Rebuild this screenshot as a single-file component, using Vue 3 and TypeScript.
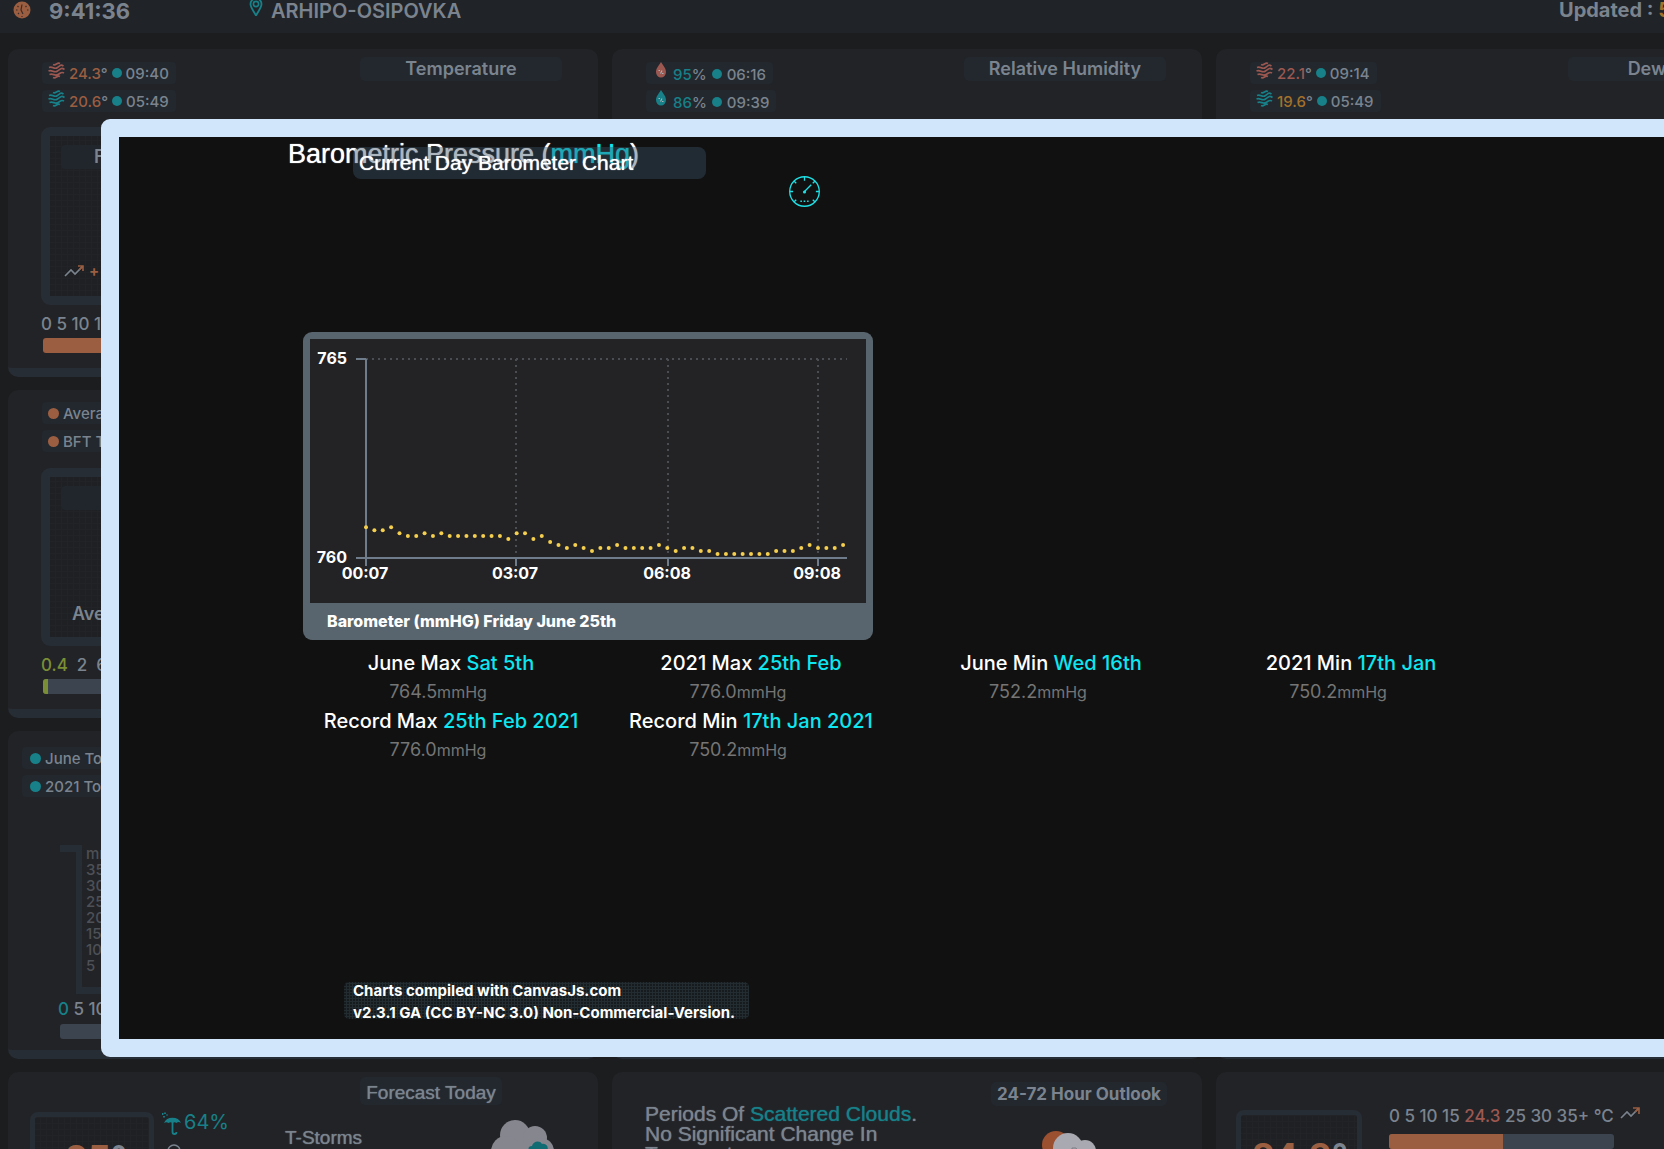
<script setup lang="ts">
interface Reading {
  icon: 'wave' | 'drop'
  tone: string
  value: string
  unit: string
  valueTone: string
  time: string
}

interface TopCard {
  title: string
  readings: Reading[]
}

interface Stat {
  label: string
  date: string
  value: string
}

const topCards: TopCard[] = [
  {
    title: 'Temperature',
    readings: [
      { icon: 'wave', tone: 'red', value: '24.3', unit: '°', valueTone: 'orange', time: '09:40' },
      { icon: 'wave', tone: 'teal', value: '20.6', unit: '°', valueTone: 'orange', time: '05:49' },
    ],
  },
  {
    title: 'Relative Humidity',
    readings: [
      { icon: 'drop', tone: 'red', value: '95', unit: '%', valueTone: 'teal', time: '06:16' },
      { icon: 'drop', tone: 'teal', value: '86', unit: '%', valueTone: 'teal', time: '09:39' },
    ],
  },
  {
    title: 'Dewpoint',
    readings: [
      { icon: 'wave', tone: 'red', value: '22.1', unit: '°', valueTone: 'red', time: '09:14' },
      { icon: 'wave', tone: 'teal', value: '19.6', unit: '°', valueTone: 'amber', time: '05:49' },
    ],
  },
]

const stats: Stat[] = [
  { label: 'June Max', date: 'Sat 5th', value: '764.5' },
  { label: '2021 Max', date: '25th Feb', value: '776.0' },
  { label: 'June Min', date: 'Wed 16th', value: '752.2' },
  { label: '2021 Min', date: '17th Jan', value: '750.2' },
  { label: 'Record Max', date: '25th Feb 2021', value: '776.0' },
  { label: 'Record Min', date: '17th Jan 2021', value: '750.2' },
]

const gaugeMarks = ['mm', '35', '30', '25', '20', '15', '10', '5']

// Readings every ten minutes, in steps of 0.1 hPa above 760.1 mmHg.
const steps = [
  9, 8, 8, 9, 7, 6, 6, 7, 6, 7, 6, 6, 6, 6, 6, 6, 6, 5, 7, 7, 5, 6, 4, 3, 2, 3, 2, 1, 2, 2,
  3, 2, 2, 2, 2, 3, 2, 1, 2, 2, 1, 1, 0, 0, 0, 0, 0, 0, 0, 1, 1, 1, 2, 3, 2, 2, 2, 3,
]
const axis = { left: 56, right: 537, top: 20, bottom: 219 }
const points = steps.map((s, i) => ({
  x: axis.left + i * 8.37,
  y: axis.bottom - ((0.1 + s * 0.075) * (axis.bottom - axis.top)) / 5,
}))
const timeTicks = [
  { x: 56, label: '00:07' },
  { x: 206, label: '03:07' },
  { x: 358, label: '06:08' },
  { x: 508, label: '09:08' },
]
</script>

<template>
  <div class="page">
    <header class="topbar">
      <svg class="clock" viewBox="0 0 18 18" aria-hidden="true">
        <circle cx="9" cy="9" r="8.5" fill="#9b5e41" />
        <path d="M9 3.500L8 9l2 4M3 9h1.500M14 9h1.500M9 15v1M4.500 5l1 1M13.500 5l-1 1M5 13l1-1" stroke="#3a2c28" stroke-width="1.200" fill="none" />
      </svg>
      <time class="now">9:41:36</time>
      <svg class="pin" viewBox="0 0 14 18" aria-hidden="true">
        <path d="M7 17.500C4 12 1.500 9.500 1.500 6a5.500 5.500 0 0 1 11 0c0 3.500-2.500 6-5.500 11.500z" fill="none" stroke="#178088" stroke-width="1.800" />
        <circle cx="7" cy="6" r="2.600" fill="none" stroke="#178088" stroke-width="1.600" />
      </svg>
      <span class="place">ARHIPO-OSIPOVKA</span>
      <span class="updated">Updated : <span class="amber">59</span></span>
    </header>

    <main class="grid">
      <section v-for="(card, index) in topCards" :key="card.title" class="card">
        <div class="head">
          <div class="pills">
            <div v-for="r in card.readings" :key="r.time" class="pill" :class="r.icon + '-pill'">
              <svg v-if="r.icon === 'wave'" class="wave" :class="r.tone" viewBox="0 0 17 17" aria-hidden="true">
                <path
                  d="M5 2.500C8 4 9 0 12 1.500M1 5.500C5 4 6 8 9.500 5.500S13 2.500 15.500 4M.500 9C4.500 7.500 6 11.500 9.500 9s4-3.500 7-1.500M1.500 12.500c4-1.500 5 2 8.500 0s3.500-3 6-1.500M5 15.500c3 1.500 4-2.500 7-1"
                  fill="none" stroke="currentColor" stroke-width="1.700" />
              </svg>
              <svg v-else class="drop" :class="r.tone" viewBox="0 0 12 16" aria-hidden="true">
                <path d="M6 0c2.500 4 5 6.500 5 10a5 5.500 0 0 1-10 0c0-3.500 2.500-6 5-10z" fill="currentColor" />
                <path d="M3.500 8.500h1.500M7 11.500h1.500M5.500 11.500l1.500-3" stroke="#a9b3b8" stroke-width="1.100" />
              </svg>
              <span><span :class="r.valueTone">{{ r.value }}</span>{{ r.unit }}</span>
              <i class="dot teal"></i>
              <span>{{ r.time }}</span>
            </div>
          </div>
          <h2 class="tag">{{ card.title }}</h2>
        </div>
        <template v-if="index === 0">
          <div class="panel">
            <div class="strip">Feels</div>
            <div class="trend">
              <svg viewBox="0 0 20 12" aria-hidden="true">
                <path d="M1 11l6-6 4 4 7-7" fill="none" stroke="#7b848e" stroke-width="1.600" />
                <path d="M14 1h5v5M15 5l4-4" fill="none" stroke="#9b5e41" stroke-width="1.600" />
              </svg>
              <span class="orange">+</span>
            </div>
          </div>
          <div class="scale">0 5 10 15</div>
          <div class="bar orange-bar"></div>
        </template>
      </section>

      <section class="card wind">
        <div class="head">
          <div class="pills">
            <div class="pill"><i class="dot orange"></i><span>Average</span></div>
            <div class="pill"><i class="dot orange"></i><span>BFT Today</span></div>
          </div>
        </div>
        <div class="panel">
          <div class="strip"></div>
          <div class="average">Average</div>
        </div>
        <div class="scale wide"><span class="green">0.4</span><span>2</span><span>6</span></div>
        <div class="bar"><div class="green-bar"></div></div>
      </section>
      <section class="card"></section>
      <section class="card"></section>

      <section class="card rain">
        <div class="head">
          <div class="pills">
            <div class="pill"><i class="dot teal"></i><span>June Total</span></div>
            <div class="pill"><i class="dot teal"></i><span>2021 Total</span></div>
          </div>
        </div>
        <div class="gauge">
          <div class="lip"></div>
          <ol class="tube">
            <li v-for="mark in gaugeMarks" :key="mark">{{ mark }}</li>
          </ol>
        </div>
        <div class="scale"><span class="teal">0</span> 5 10</div>
        <div class="bar"></div>
      </section>
      <section class="card"></section>
      <section class="card"></section>

      <section class="card forecast">
        <h2 class="tag sans">Forecast Today</h2>
        <div class="forecast-row">
          <div class="mini"><span class="orange">25</span>°</div>
          <div class="rainchance">
            <div class="chance teal">
              <svg viewBox="0 0 20 24" aria-hidden="true">
                <path d="M2 11a9 8 0 0 1 17 0c-2-1.200-3-1.200-4.500 0-1.200-1-2.500-1-4 0-1.200-1-2.500-1-4 0C5 9.800 3.500 10 2 11z" fill="currentColor" />
                <path d="M10.500 8v12a2 2 0 0 0 4 0M.5 1v2M3 .5v1.500M2 4v1.500M5 2.500v1" fill="none" stroke="currentColor" stroke-width="1.800" />
              </svg>
              <span>64%</span>
            </div>
            <svg class="ring" viewBox="0 0 14 14" aria-hidden="true">
              <circle cx="7" cy="7" r="6" fill="none" stroke="#7b848e" stroke-width="1.500" />
            </svg>
          </div>
          <div class="condition">T-Storms</div>
          <svg class="cloud" viewBox="0 0 64 50" aria-hidden="true">
            <g fill="#85868e">
              <circle cx="24" cy="15" r="15" />
              <circle cx="44" cy="18" r="12" />
              <circle cx="15" cy="31" r="15" />
              <circle cx="50" cy="31" r="13" />
              <rect x="10" y="22" width="40" height="24" />
            </g>
            <path d="M40 34c-3-3-4-8 1-8 1-5 8-6 10-2 5-1 7 4 5 7 3 5 0 9-5 12H38c-3-3-1-8 2-9z" fill="#116b73" />
          </svg>
        </div>
      </section>

      <section class="card outlook">
        <p>Periods Of <span class="teal">Scattered Clouds</span>.<br>No Significant Change In<br>Temperature</p>
        <div class="outlook-side">
          <h2 class="tag">24-72 Hour Outlook</h2>
          <svg class="suncloud" viewBox="0 0 60 40" aria-hidden="true">
            <circle cx="14" cy="14" r="14" fill="#9b5030" />
            <g fill="#a9a9b1">
              <circle cx="26" cy="17" r="15" />
              <circle cx="43" cy="20" r="11" />
              <circle cx="18" cy="26" r="9" />
              <circle cx="51" cy="27" r="9" />
            </g>
            <path d="M30 20v-3h4l2 3" fill="none" stroke="#7b7c84" />
          </svg>
        </div>
      </section>

      <section class="card current">
        <div class="mini"><span class="orange">24.3</span>°</div>
        <div class="current-side">
          <div class="legend">
            <span>0 5 10 15 <span class="red">24.3</span> 25 30 35+ °C</span>
            <svg viewBox="0 0 20 12" aria-hidden="true">
              <path d="M1 11l6-6 4 4 7-7" fill="none" stroke="#7b848e" stroke-width="1.600" />
              <path d="M13 1h6v6M15 5l4-4" fill="none" stroke="#9b5e41" stroke-width="1.600" />
            </svg>
          </div>
          <div class="bar"><div class="temp-fill"></div></div>
        </div>
      </section>
    </main>

    <div class="modal" role="dialog" aria-label="Barometric Pressure">
      <h1 class="title">Barometric Pressure (<span class="cyan">mmHg</span>)</h1>
      <div class="caption">Current Day Barometer Chart</div>
      <svg class="dial" viewBox="0 0 30 30" aria-hidden="true">
        <circle cx="15" cy="15" r="14.300" fill="none" stroke="#1fe0e6" stroke-width="1.300" />
        <path
          d="M15 1v3.500M1 15h3M26 15h3M5 5l2 2M25 5l-2 2M5 25l2-2M25 25l-2-2M15 15l6.500-6.500"
          stroke="#1fe0e6" stroke-width="1.300" fill="none" />
        <circle cx="15" cy="15.500" r="1.500" fill="#1fe0e6" />
        <path d="M11 24.500h1.500M14.200 24.500h1.500M17.500 24.500H19" stroke="#1fe0e6" stroke-width="1.500" />
      </svg>

      <figure class="chart">
        <svg viewBox="0 0 556 264" role="img" aria-label="Barometer chart">
          <g stroke="#4a4d51" stroke-width="2" stroke-dasharray="2 4">
            <line :x1="axis.left" :x2="axis.right" :y1="axis.top" :y2="axis.top" />
            <line v-for="t in timeTicks.slice(1)" :key="t.label" :x1="t.x" :x2="t.x" :y1="axis.top" :y2="axis.bottom" />
          </g>
          <g stroke="#6f7c8c" stroke-width="2">
            <line :x1="axis.left" :x2="axis.left" :y1="axis.top" :y2="axis.bottom + 8" />
            <line :x1="axis.left - 10" :x2="axis.right" :y1="axis.bottom" :y2="axis.bottom" />
            <line :x1="axis.left - 10" :x2="axis.left" :y1="axis.top" :y2="axis.top" />
            <line v-for="t in timeTicks" :key="t.label" :x1="t.x" :x2="t.x" :y1="axis.bottom" :y2="axis.bottom + 8" />
          </g>
          <circle v-for="(p, i) in points" :key="i" :cx="p.x" :cy="p.y" r="2" fill="#f5cf4e" />
          <g class="ticks">
            <text x="37" y="25" text-anchor="end">765</text>
            <text x="37" y="224" text-anchor="end">760</text>
            <text v-for="t in timeTicks" :key="t.label" :x="t.x - 1" y="240" text-anchor="middle">{{ t.label }}</text>
          </g>
        </svg>
        <figcaption>Barometer (mmHG) Friday June 25th</figcaption>
      </figure>

      <dl class="stats">
        <div v-for="s in stats" :key="s.label">
          <dt>{{ s.label }} <span class="cyan">{{ s.date }}</span></dt>
          <dd>{{ s.value }}<small>mmHg</small></dd>
        </div>
      </dl>

      <div class="credit">
        <p>Charts compiled with CanvasJs.com<br>v2.3.1 GA (CC BY-NC 3.0) Non-Commercial-Version.</p>
      </div>
    </div>
  </div>
</template>

<style>
body {
  margin: 0;
  background: #1c1d1f;
}
</style>

<style scoped>
* {
  box-sizing: border-box;
}
.page {
  position: relative;
  height: 100vh;
  overflow: hidden;
  background: #1c1d1f;
  color: #7b848e;
  font-family: Inter, "Liberation Sans", sans-serif;
  font-size: 15px;
  font-weight: 500;
}
h1, h2, p, dl, dd, ol, figure {
  margin: 0;
  padding: 0;
}
.red { color: #9c5850; }
.orange { color: #9b5e41; }
.amber { color: #a5712a; }
.teal { color: #178088; }
.green { color: #7a8e35; }
.cyan { color: #0ee6f0; }

.topbar {
  display: flex;
  align-items: flex-start;
  height: 33px;
  margin-bottom: 16px;
  padding-left: 13px;
  background: #202328;
  line-height: 22px;
  white-space: nowrap;
}
.clock {
  width: 18px;
  height: 18px;
  margin-top: 1px;
}
.now {
  width: 200px;
  margin-left: 18px;
  font-size: 22px;
  font-weight: 700;
}
.pin {
  width: 14px;
  height: 18px;
  margin-top: -2px;
}
.place {
  margin-left: 8px;
  font-size: 20px;
  font-weight: 600;
}
.updated {
  flex: none;
  width: 105px;
  margin-left: auto;
  font-size: 20px;
  font-weight: 700;
  line-height: 20px;
}

.grid {
  display: grid;
  grid-template-columns: repeat(3, minmax(590px, 1fr));
  grid-auto-rows: 328px;
  gap: 13px 14px;
  margin-left: 8px;
}
.card {
  border-bottom: 9px solid #272d34;
  border-radius: 10px;
  background: #222327;
  overflow: hidden;
}
.head {
  display: flex;
  align-items: flex-start;
  justify-content: space-between;
  padding: 0 36px 0 34px;
}
.pills {
  display: flex;
  flex-direction: column;
  align-items: flex-start;
  gap: 6px;
  padding-top: 13px;
}
.pill {
  display: flex;
  align-items: center;
  gap: 4px;
  height: 22px;
  padding: 0 7px 0 6px;
  border-radius: 4px;
  background: #22282e;
  white-space: nowrap;
}
.drop-pill {
  gap: 5px;
  padding-top: 2px;
}
.wave {
  width: 17px;
  height: 17px;
  margin-top: -5px;
}
.drop {
  width: 12px;
  height: 16px;
  margin: -8px 1px 0 3px;
}
.dot {
  width: 10px;
  height: 10px;
  border-radius: 50%;
  background: currentColor;
}
.tag {
  width: 202px;
  height: 24px;
  margin-top: 8px;
  border-radius: 5px;
  background: #22282e;
  font-size: 18px;
  font-weight: 600;
  line-height: 24px;
  text-align: center;
}
.panel {
  width: 186px;
  height: 178px;
  margin: 15px 0 0 33px;
  padding: 9px 11px;
  border: 9px solid #272d34;
  border-radius: 9px;
  background:
    repeating-linear-gradient(0deg, transparent 0 5px, #212327 5px 6px),
    repeating-linear-gradient(90deg, transparent 0 5px, #212327 5px 6px),
    #1e2023;
}
.strip {
  height: 24px;
  padding-left: 33px;
  border-radius: 4px;
  background: #20262b;
  font-size: 18px;
  font-weight: 600;
  line-height: 24px;
}
.trend {
  display: flex;
  gap: 5px;
  align-items: center;
  margin: 92px 0 0 3px;
  font-weight: 700;
}
.trend svg,
.legend svg {
  width: 20px;
  height: 12px;
}
.average {
  margin: 93px 0 0 11px;
  font-size: 18px;
  font-weight: 600;
}
.wind .pills {
  padding-top: 12px;
}
.wind .dot,
.rain .dot {
  width: 11px;
  height: 11px;
}
.wind .panel {
  margin-top: 16px;
}
.scale {
  height: 33px;
  padding-top: 4px;
  margin-left: 33px;
  font-size: 17px;
  line-height: 30px;
}
.wide {
  display: flex;
  gap: 9px;
}
.bar {
  width: 240px;
  height: 15px;
  margin-left: 35px;
  border-radius: 3px;
  background: #3b444f;
  overflow: hidden;
}
.orange-bar {
  background: #9b5e41;
}
.green-bar {
  width: 5px;
  height: 15px;
  background: #7a8e35;
}
.rain .head {
  padding: 3px 36px 0 14px;
}
.rain .pill {
  padding-left: 8px;
}
.gauge {
  display: flex;
  height: 149px;
  margin: 48px 0 0 52px;
}
.lip {
  width: 16px;
  height: 7px;
  background: #272d34;
}
.tube {
  width: 90px;
  padding: 1px 0 0 4px;
  border: solid #272d34;
  border-width: 0 6px 7px;
  color: #4d5056;
  line-height: 16px;
  list-style: none;
}
.rain .scale {
  height: 30px;
  padding-top: 0;
  margin-left: 50px;
  line-height: 31px;
}
.rain .bar {
  margin-left: 52px;
}

.forecast {
  display: flex;
  flex-direction: column;
  padding: 5px 96px 0 22px;
}
.sans {
  align-self: flex-end;
  width: 142px;
  height: 28px;
  margin: 0;
  font-family: "Liberation Sans", sans-serif;
  font-size: 19px;
  font-weight: 400;
  line-height: 32px;
  text-shadow: 0 0 1px;
}
.forecast-row {
  display: flex;
  align-items: flex-start;
  margin: 7px -60px 0 0;
}
.mini {
  flex: none;
  width: 124px;
  height: 100px;
  padding: 19px 0 0 8px;
  border: 5px solid #272d34;
  border-radius: 8px;
  background:
    repeating-linear-gradient(0deg, transparent 0 5px, #212327 5px 6px),
    repeating-linear-gradient(90deg, transparent 0 5px, #212327 5px 6px),
    #1e2023;
  font-size: 36px;
  font-weight: 700;
  text-align: center;
}
.rainchance {
  flex: none;
  width: 123px;
  padding-left: 8px;
}
.chance {
  display: flex;
  gap: 2px;
  font-size: 20px;
  font-weight: 400;
  line-height: 20px;
}
.chance svg {
  width: 20px;
  height: 24px;
}
.ring {
  width: 14px;
  height: 14px;
  margin: 8px 0 0 5px;
}
.condition {
  flex: none;
  width: 214px;
  margin-top: 15px;
  padding-left: 8px;
  font-family: "Liberation Sans", sans-serif;
  font-size: 19px;
  font-weight: 400;
  text-shadow: 0 0 1px;
}
.cloud {
  flex: none;
  width: 64px;
  height: 50px;
  margin-top: 8px;
}
.outlook {
  display: flex;
  justify-content: space-between;
  padding: 0 35px 0 33px;
}
.outlook p {
  padding-top: 32px;
  font-family: "Liberation Sans", sans-serif;
  font-size: 21px;
  font-weight: 400;
  line-height: 20px;
  text-shadow: 0 0 1px;
}
.outlook .tag {
  width: 176px;
  margin-top: 10px;
  font-size: 17px;
  font-weight: 700;
  line-height: 25px;
}
.suncloud {
  width: 60px;
  height: 40px;
  margin: 25px 0 0 51px;
}
.current {
  display: flex;
  gap: 27px;
  padding: 38px 0 0 20px;
}
.current .mini {
  width: 126px;
  padding-left: 2px;
}
.legend {
  display: flex;
  gap: 6px;
  align-items: flex-start;
  height: 30px;
  margin-top: -6px;
  font-size: 17px;
  line-height: 24px;
  white-space: nowrap;
}
.legend svg {
  margin-top: 3px;
}
.current .bar {
  width: 225px;
  margin-left: 0;
}
.temp-fill {
  width: 114px;
  height: 15px;
  background: #9b5e41;
}

/* Lightbox: wider than the window, so its right edge runs off the page. */
.modal {
  position: absolute;
  top: 119px;
  right: -80px;
  bottom: 92px;
  left: 101px;
  border: 18px solid #d1e6fb;
  border-radius: 9px;
  background: #111;
  color: #fff;
  overflow: hidden;
}
.title {
  padding: 2px 0 0 169px;
  font-family: "Liberation Sans", sans-serif;
  font-size: 27px;
  font-weight: 400;
  line-height: 31px;
  text-shadow: 0 0 1px;
}
.caption {
  position: absolute;
  top: 10px;
  left: 234px;
  width: 353px;
  height: 32px;
  padding-left: 6px;
  border-radius: 8px;
  background: rgba(57, 82, 101, 0.42);
  font-family: "Liberation Sans", sans-serif;
  font-size: 21px;
  font-weight: 400;
  line-height: 32px;
  text-shadow: 0 0 1px;
}
.dial {
  display: block;
  width: 31px;
  height: 31px;
  margin: 6px 0 0 670px;
}
.chart {
  width: 570px;
  margin: 125px 0 0 184px;
  border: 7px solid #59656e;
  border-bottom-width: 0;
  border-radius: 9px;
  background: #59656e;
}
.chart svg {
  display: block;
  width: 100%;
  background: #232326;
}
.ticks {
  fill: #fff;
  font-size: 16px;
  font-weight: 700;
}
figcaption {
  height: 37px;
  padding-left: 17px;
  font-size: 16px;
  font-weight: 800;
  line-height: 37px;
}
.stats {
  display: grid;
  grid-template-columns: repeat(4, 300px);
  margin: 9px 0 0 182px;
  font-size: 18px;
  line-height: 29px;
  text-align: center;
  white-space: nowrap;
}
.stats dt {
  font-size: 20px;
}
.stats dd {
  height: 29px;
  padding-right: 26px;
  color: #757575;
  font-weight: 400;
  line-height: 28px;
}
.stats small {
  font-size: 16px;
  line-height: 16px;
}
.credit {
  width: 405px;
  height: 37px;
  margin: 217px 0 0 225px;
  padding-left: 9px;
  border-radius: 5px;
  background:
    repeating-linear-gradient(0deg, transparent 0 2px, #222c31 2px 3px),
    repeating-linear-gradient(90deg, #161b1d 0 2px, #222c31 2px 3px);
  overflow: hidden;
}
.credit p {
  margin-top: -2px;
  font-size: 15px;
  font-weight: 700;
  line-height: 22px;
  white-space: nowrap;
}
</style>
